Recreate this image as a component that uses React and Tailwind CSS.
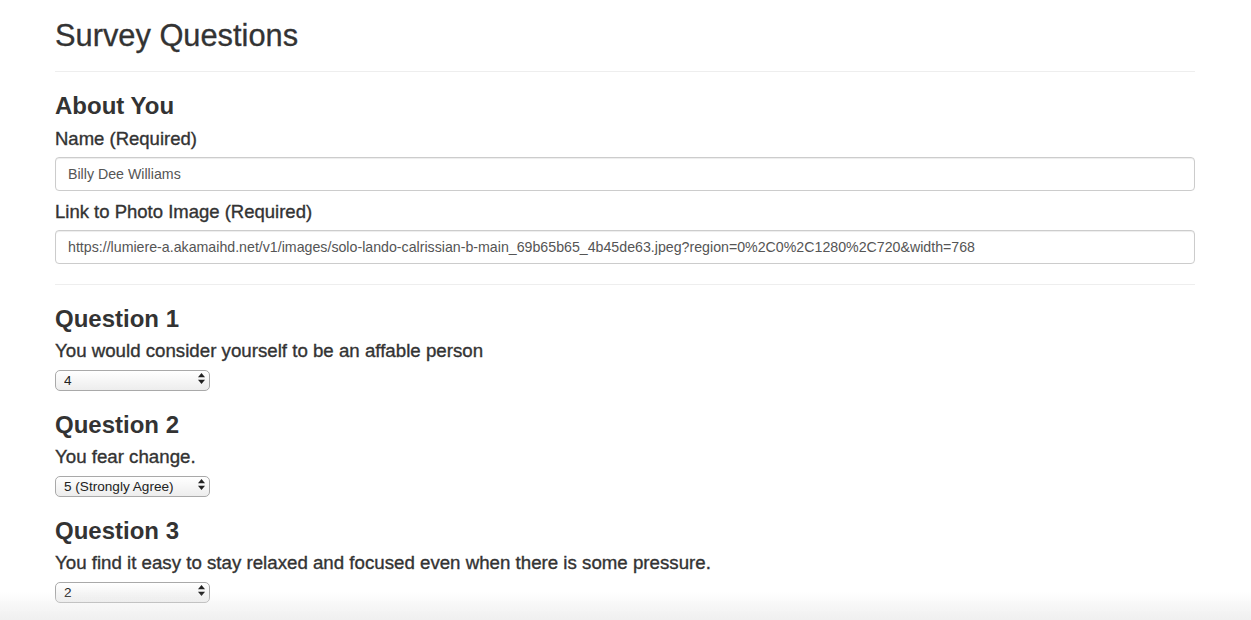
import React from "react";

const QUESTIONS = [
  { title: "Question 1", text: "You would consider yourself to be an affable person", value: "4" },
  { title: "Question 2", text: "You fear change.", value: "5" },
  { title: "Question 3", text: "You find it easy to stay relaxed and focused even when there is some pressure.", value: "2" },
];

const OPTIONS = [
  { value: "", label: "Select an Option" },
  { value: "1", label: "1 (Strongly Disagree)" },
  { value: "2", label: "2" },
  { value: "3", label: "3" },
  { value: "4", label: "4" },
  { value: "5", label: "5 (Strongly Agree)" },
];

function TextField({ label, value, first }) {
  return (
    <div className={first ? "" : "mt-[11px]"}>
      <label className="block text-[18.5px] leading-[20px] mb-[8px] [-webkit-text-stroke:0.35px_#333]">{label}</label>
      <input
        type="text"
        defaultValue={value}
        className="block w-full h-[34px] px-3 text-[14.2px] text-[#555] bg-white border border-[#ccc] rounded-[4px] shadow-[inset_0_1px_1px_rgba(0,0,0,0.075)] outline-none"
      />
    </div>
  );
}

function ScoreSelect({ value }) {
  return (
    <div className="relative w-[155px] h-[21px]">
      <select
        defaultValue={value}
        className="appearance-none w-full h-full pl-[8px] pr-6 text-[13.6px] leading-[19px] text-[#222] rounded-[5px] border border-[#a9a9a9] bg-gradient-to-b from-white to-[#ededed] outline-none"
      >
        {OPTIONS.map((o) => (
          <option key={o.value} value={o.value}>{o.label}</option>
        ))}
      </select>
      {/* up / down arrows */}
      <svg className="absolute right-[5px] top-[5px] pointer-events-none" width="7" height="11" viewBox="0 0 7 11">
        <path d="M3.5 0 L7 4.2 L0 4.2 Z" fill="#222" />
        <path d="M3.5 11 L7 6.8 L0 6.8 Z" fill="#222" />
      </svg>
    </div>
  );
}

export default function App() {
  return (
    <div className="min-h-[620px] bg-white text-[#333] font-['Liberation_Sans',Arial,sans-serif]">
      <div className="pl-[55px] pr-[56px] pb-10">
        <h1 className="pt-[19px] text-[30.8px] leading-[33px] [-webkit-text-stroke:0.3px_#333]">Survey Questions</h1>
        <hr className="mt-[19px] border-0 border-t border-[#eee]" />

        <h3 className="mt-[21px] text-[24px] leading-[26px] font-bold">About You</h3>
        <div className="mt-[10px]">
          <TextField first label="Name (Required)" value="Billy Dee Williams" />
          <TextField
            label="Link to Photo Image (Required)"
            value="https://lumiere-a.akamaihd.net/v1/images/solo-lando-calrissian-b-main_69b65b65_4b45de63.jpeg?region=0%2C0%2C1280%2C720&width=768"
          />
        </div>
        <hr className="mt-[20px] border-0 border-t border-[#eee]" />

        {QUESTIONS.map((q, i) => (
          <div key={q.title} className={i === 0 ? "mt-[21px]" : "mt-[23px]"}>
            <h3 className="text-[24px] leading-[26px] font-bold">{q.title}</h3>
            <p className="mt-[9px] text-[18.7px] leading-[20px] [-webkit-text-stroke:0.35px_#333]">{q.text}</p>
            <div className="mt-[7px]">
              <ScoreSelect value={q.value} />
            </div>
          </div>
        ))}
      </div>
      {/* soft shadow at the bottom edge of the window */}
      <div className="fixed left-0 right-0 bottom-0 h-[28px] pointer-events-none bg-gradient-to-b from-white/0 to-[#efefef]" />
    </div>
  );
}
